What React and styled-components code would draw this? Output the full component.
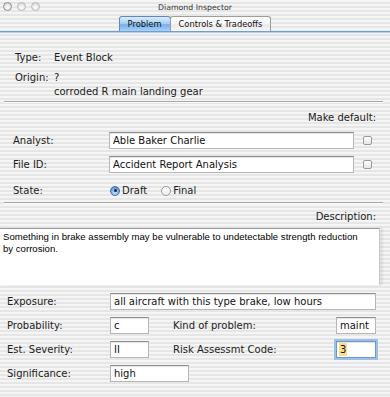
import React from 'react';
import styled, { createGlobalStyle } from 'styled-components';

const GlobalStyle = createGlobalStyle`
  html, body {
    margin: 0;
    padding: 0;
  }
  body {
    font-family: "DejaVu Sans", Verdana, sans-serif;
    background: #ececec;
  }
`;

const pinstripe = `repeating-linear-gradient(
  to bottom,
  #f5f5f5 0px,
  #f5f5f5 2px,
  #e6e6e6 2px,
  #e6e6e6 4px
)`;

const App = () => {
  return (
    <>
      <GlobalStyle />
      <Window>
        {/* title bar */}
        <TitleBar>
          <Lights>
            <Light $dark />
            <Light />
            <Light />
          </Lights>
          <Title>Diamond Inspector</Title>
          <Lights />
        </TitleBar>

        {/* tabs */}
        <TabBar>
          <Tab $active>Problem</Tab>
          <Tab>Controls &amp; Tradeoffs</Tab>
        </TabBar>
        <TabRule />

        <Content>
          <InfoSection>
            <InfoRow>
              <span>Type:</span>
              <span>Event Block</span>
            </InfoRow>
            <InfoRow $spaced>
              <span>Origin:</span>
              <span>
                ?
                <br />
                corroded R main landing gear
              </span>
            </InfoRow>
          </InfoSection>

          <Separator $top={2} />

          <SectionHeader $top={9}>Make default:</SectionHeader>

          <FormRow $top={7}>
            <Label>Analyst:</Label>
            <Field $width={245}>Able Baker Charlie</Field>
            <Checkbox />
          </FormRow>
          <FormRow $top={7}>
            <Label>File ID:</Label>
            <Field $width={245}>Accident Report Analysis</Field>
            <Checkbox />
          </FormRow>
          <FormRow $top={9}>
            <Label>State:</Label>
            <RadioGroup>
              <RadioOption>
                <Radio $checked />
                Draft
              </RadioOption>
              <RadioOption>
                <Radio />
                Final
              </RadioOption>
            </RadioGroup>
          </FormRow>

          <Separator $top={3} />

          <SectionHeader $top={7}>Description:</SectionHeader>

          <Description>
            Something in brake assembly may be vulnerable to undetectable strength reduction
            by corrosion.
          </Description>

          {/* risk grid */}
          <RiskGrid>
            <GridLabel>Exposure:</GridLabel>
            <Field $span="2 / 6">all aircraft with this type brake, low hours</Field>

            <GridLabel>Probability:</GridLabel>
            <Field>c</Field>
            <GridLabel $col={4}>Kind of problem:</GridLabel>
            <Field>maint</Field>

            <GridLabel>Est. Severity:</GridLabel>
            <Field>II</Field>
            <GridLabel $col={4}>Risk Assessmt Code:</GridLabel>
            <Field $focused>
              <Selected>3</Selected>
            </Field>

            <GridLabel>Significance:</GridLabel>
            <Field $span="2 / 5" $width={79}>
              high
            </Field>
          </RiskGrid>
        </Content>
      </Window>
    </>
  );
};

export default App;

const Window = styled.div`
  width: 390px;
  height: 397px;
  overflow: hidden;
  display: flex;
  flex-direction: column;
  background: ${pinstripe};
  color: #1c1c1c;
`;

const TitleBar = styled.div`
  display: flex;
  align-items: center;
  height: 13px;
`;

const Lights = styled.div`
  display: flex;
  align-items: center;
  gap: 5px;
  width: 50px;
  padding-left: 3px;
  box-sizing: border-box;
`;

const Light = styled.div`
  width: 9px;
  height: 9px;
  border-radius: 50%;
  box-sizing: border-box;
  border: 1px solid ${p => (p.$dark ? '#8c8c8c' : '#b9b9b9')};
  background: radial-gradient(circle at 50% 70%, #ffffff 0%, #e4e4e4 60%, #cfcfcf 100%);
`;

const Title = styled.div`
  flex: 1;
  text-align: center;
  font-size: 7.8px;
  line-height: 13px;
  color: #333;
  padding-top: 1px;
`;

const TabBar = styled.div`
  display: flex;
  justify-content: center;
  align-items: flex-end;
  height: 18px;
`;

const Tab = styled.div`
  height: 15px;
  box-sizing: border-box;
  padding: 0 8px;
  font-size: 8.3px;
  line-height: 14px;
  color: #111;
  border: 1px solid ${p => (p.$active ? '#5e88bf' : '#9d9d9d')};
  border-bottom: none;
  border-radius: 3px 3px 0 0;
  margin-left: ${p => (p.$active ? '0' : '-1px')};
  background: ${p =>
    p.$active
      ? 'linear-gradient(to bottom, #dcecfb 0%, #a9d0f5 45%, #78b0ea 55%, #a8d1f6 100%)'
      : 'linear-gradient(to bottom, #ffffff 0%, #f6f6f6 50%, #e9e9e9 55%, #f7f7f7 100%)'};
`;

const TabRule = styled.div`
  height: 2px;
  box-sizing: border-box;
  border-top: 1px solid #6f9dd6;
  border-bottom: 1px solid #b3d0ef;
`;

const Content = styled.div`
  display: flex;
  flex-direction: column;
  font-size: 10px;
`;

const InfoSection = styled.div`
  padding: 18px 0 0 15px;
`;

const InfoRow = styled.div`
  display: grid;
  grid-template-columns: 39px 1fr;
  line-height: 14px;
  margin-top: ${p => (p.$spaced ? '6px' : '0')};
`;

const Separator = styled.div`
  height: 1px;
  margin: ${p => p.$top}px 7px 0 4px;
  background: #a6a6a6;
  box-shadow: 0 1px 0 #fbfbfb;
`;

const SectionHeader = styled.div`
  margin-top: ${p => p.$top}px;
  padding-right: 14px;
  text-align: right;
  line-height: 14px;
`;

const FormRow = styled.div`
  display: flex;
  align-items: center;
  height: 17px;
  margin-top: ${p => p.$top}px;
  padding-left: 13px;
`;

const Label = styled.div`
  width: 96px;
  flex-shrink: 0;
`;

const Field = styled.div`
  box-sizing: border-box;
  height: 17px;
  width: ${p => (p.$width ? `${p.$width}px` : 'auto')};
  grid-column: ${p => p.$span || 'auto'};
  display: flex;
  align-items: center;
  padding: 0 3px;
  background: #fff;
  color: #111;
  white-space: nowrap;
  overflow: hidden;
  border: 1px solid ${p => (p.$focused ? '#6d97c9' : '#b7b7b7')};
  border-top-color: ${p => (p.$focused ? '#6d97c9' : '#8d8d8d')};
  box-shadow: ${p =>
    p.$focused
      ? '0 0 0 2px #9cc0e8, inset 0 1px 1px rgba(0,0,0,0.12)'
      : 'inset 0 1px 1px rgba(0,0,0,0.1)'};
`;

const Selected = styled.span`
  display: inline-block;
  height: 13px;
  line-height: 13px;
  background: #fbdf8c;
  padding: 0 1px;
  margin-left: -1px;
`;

const Checkbox = styled.div`
  width: 9px;
  height: 9px;
  margin-left: 9px;
  box-sizing: border-box;
  border: 1px solid #9a9a9a;
  border-radius: 2px;
  background: linear-gradient(to bottom, #fdfdfd 0%, #e6e6e6 100%);
`;

const RadioGroup = styled.div`
  display: flex;
  align-items: center;
  gap: 14px;
  margin-left: 1px;
`;

const RadioOption = styled.div`
  display: flex;
  align-items: center;
  gap: 2px;
`;

const Radio = styled.div`
  width: 10px;
  height: 10px;
  border-radius: 50%;
  box-sizing: border-box;
  position: relative;
  border: 1px solid ${p => (p.$checked ? '#3f6fae' : '#9a9a9a')};
  background: ${p =>
    p.$checked
      ? 'radial-gradient(circle at 50% 70%, #c9e4fb 0%, #6aa6e6 60%, #3d7cc9 100%)'
      : 'linear-gradient(to bottom, #ffffff 0%, #ececec 100%)'};

  &::after {
    content: '';
    display: ${p => (p.$checked ? 'block' : 'none')};
    position: absolute;
    left: 2.5px;
    top: 2.5px;
    width: 3px;
    height: 3px;
    border-radius: 50%;
    background: #10233d;
  }
`;

const Description = styled.div`
  margin-top: 4px;
  width: 380px;
  height: 57px;
  box-sizing: border-box;
  padding: 2px 14px 0 3px;
  background: #fff;
  border-top: 1px solid #9b9b9b;
  border-right: 1px solid #c9c9c9;
  box-shadow: 3px 0 2px rgba(0, 0, 0, 0.07);
  font-family: "Liberation Sans", Arial, sans-serif;
  font-size: 9.6px;
  line-height: 12px;
  color: #000;
`;

const RiskGrid = styled.div`
  display: grid;
  grid-template-columns: 103px 39px 24px 163px 40px;
  grid-auto-rows: 17px;
  row-gap: 7px;
  margin-top: 8px;
  padding-left: 7px;
`;

const GridLabel = styled.div`
  grid-column: ${p => p.$col || 1};
  line-height: 17px;
  white-space: nowrap;
`;
